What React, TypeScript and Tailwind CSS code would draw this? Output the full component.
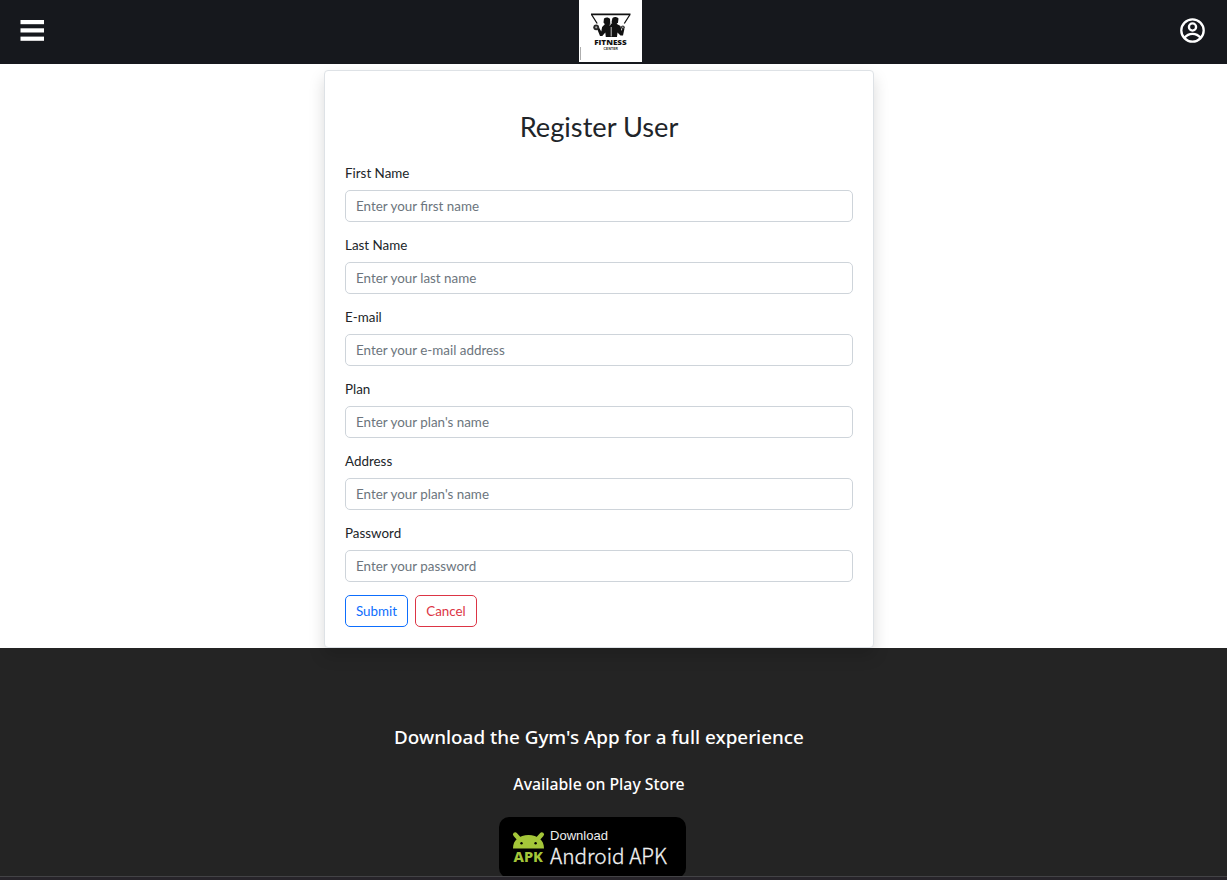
const fields = [
  { label: "First Name", hint: "Enter your first name", type: "text" },
  { label: "Last Name", hint: "Enter your last name", type: "text" },
  { label: "E-mail", hint: "Enter your e-mail address", type: "email" },
  { label: "Plan", hint: "Enter your plan's name", type: "text" },
  { label: "Address", hint: "Enter your plan's name", type: "text" },
  { label: "Password", hint: "Enter your password", type: "password" },
];

function Logo() {
  return (
    <svg className="block h-[62px] w-[63px]" viewBox="0 0 63 62">
      <rect width="63" height="62" fill="#fff" />
      <path d="M12.8 15l5.4 8.5M50.7 15l-5.4 8.5" fill="none" stroke="#111" strokeWidth="1.3" />
      <path d="M12 13.5H51.5V15.3H12Z" fill="#111" />
      <path d="M25 18.500c2-1.500 4.500-1.500 6 .5l.5 4-2 2h-3l-2-2.500Z" fill="#111" />
      <path d="M33.500 18c2-1.500 4.500-1 6 .5l-.5 4-2.500 2.500h-3l-1-3Z" fill="#111" />
      <path d="M26.500 23.500h10.500l4.500 2.500 1 5 1.200-3 1.800.5-1.500 7h-2.500l-3-3-.5 4.500H26.800l-.5-4.500-3 3.500H21l-3-7.500 2-1 2.300 4 .8-4.500Z" fill="#111" />
      <path d="M31.800 19v4.500l-1 2M32.200 27v9.500" fill="none" stroke="#eee" strokeWidth=".8" />
      <circle cx="17.2" cy="27.3" r="2.9" fill="#2a2a2a" />
      <circle cx="17.2" cy="27.3" r="1.1" fill="#aaa" />
      <circle cx="43.8" cy="27.3" r="1.9" fill="#333" />
      <circle cx="43.8" cy="27.3" r=".7" fill="#bbb" />
      <text x="15.2" y="45.3" textLength="32.5" lengthAdjust="spacingAndGlyphs" fontFamily="Open Sans, sans-serif" fontWeight="800" fontSize="7.5" fill="#111">FITNESS</text>
      <text x="24.5" y="50.2" textLength="14.5" fontFamily="Liberation Sans, sans-serif" fontWeight="700" fontSize="3.3" fill="#222">CENTER</text>
      <path d="M1.5 47v13" stroke="#999" strokeWidth=".8" />
    </svg>
  );
}

function Header() {
  return (
    <header className="flex h-16 shrink-0 items-start bg-[#16181d] pl-5 pr-[22px]">
      <button aria-label="Menu" className="mt-[19px]">
        <svg className="block h-[23px] w-6" viewBox="0 0 24 23" fill="#fff">
          <rect x=".5" y="1" width="23.5" height="4.2" />
          <rect x=".5" y="9.3" width="23.5" height="4.2" />
          <rect x=".5" y="17.6" width="23.5" height="4.2" />
        </svg>
      </button>
      <div className="ml-[535px]"><Logo /></div>
      <button aria-label="Account" className="ml-auto mt-[18px]">
        <svg className="block size-[25px]" viewBox="0 0 25 25" fill="none" stroke="#fff" strokeWidth="2.3">
          <circle cx="12.5" cy="12.5" r="11.2" />
          <circle cx="12.5" cy="9" r="3.6" />
          <path d="M4.5 19.8c2-2.6 4.9-4 8-4s6 1.4 8 4" />
        </svg>
      </button>
    </header>
  );
}

export default function App() {
  return (
    <div className="flex h-[880px] flex-col overflow-hidden bg-white font-['Lato',sans-serif] text-[#212529]">
      <Header />
      <main className="relative ml-[324px] mt-[6px] h-[578px] w-[550px] shrink-0 rounded border border-[#dee2e6] bg-white px-5 pt-[36px] shadow-[0_8px_16px_rgba(0,0,0,0.15)]">
        <h1 className="mb-[15px] h-10 text-center text-[27.2px] leading-10">Register User</h1>
        <form>
          {fields.map((f) => (
            <div key={f.label} className="mb-3 h-[60px]">
              <label className="block h-7 pt-px text-[13.4px] leading-[21px]">{f.label}</label>
              <input
                type={f.type}
                placeholder={f.hint}
                className="block h-8 w-full rounded-[5px] border border-[#ced4da] px-[10px] pb-px text-[13.4px] placeholder:text-[#6c757d]"
              />
            </div>
          ))}
          <div className="flex gap-[7px] pt-px">
            <button type="button" className="h-8 w-[63px] rounded-[5px] border border-[#0d6efd] pt-px text-[13.4px] text-[#0d6efd]">Submit</button>
            <button type="button" className="h-8 w-[62px] rounded-[5px] border border-[#dc3545] pt-px text-[13.4px] text-[#dc3545]">Cancel</button>
          </div>
        </form>
      </main>
      <footer className="flex h-[228px] shrink-0 flex-col items-start bg-[#242424] pt-[74px] text-white">
        <h2 className="ml-[324px] h-[30px] w-[550px] whitespace-nowrap text-center font-['Noto_Sans',sans-serif] text-[18.85px] font-medium leading-[30px]">Download the Gym's App for a full experience</h2>
        <p className="ml-[324px] mt-[20px] h-6 w-[550px] whitespace-nowrap text-center font-['Noto_Sans',sans-serif] text-[15.8px] font-medium leading-6">Available on Play Store</p>
        <a className="ml-[499px] mt-[21px] block h-[59px] w-[187px] overflow-hidden">
          <svg className="block" width="187" height="62" viewBox="0 0 187 62">
            <rect width="187" height="61" rx="10" fill="#000" />
            <path d="M14 31.5c0-4.500 1.500-7.500 4-9.500 3-2.800 7-4 11.500-4s8.500 1.200 11.500 4c2.500 2 4 5 4 9.500Z" fill="#a4c639" />
            <path d="M16.200 17.500l4.500 5M42.800 17.500l-4.500 5" stroke="#a4c639" strokeWidth="4.4" strokeLinecap="round" />
            <circle cx="22.5" cy="26.3" r="1.2" fill="#000" />
            <circle cx="36.6" cy="26.3" r="1.2" fill="#000" />
            <text x="14.5" y="45.3" textLength="29.500" lengthAdjust="spacingAndGlyphs" fontFamily="Noto Sans, sans-serif" fontWeight="800" fontSize="13.5" fill="#a4c639">APK</text>
            <text x="51" y="23" textLength="58" lengthAdjust="spacingAndGlyphs" fontFamily="Liberation Sans, sans-serif" fontSize="13" fill="#eee">Download</text>
            <text x="51" y="46.5" textLength="117" lengthAdjust="spacingAndGlyphs" fontFamily="Noto Sans CJK SC, sans-serif" fontWeight="300" fontSize="21" fill="#f2f2f2" stroke="#f2f2f2" strokeWidth=".3">Android APK</text>
          </svg>
        </a>
      </footer>
      <div className="h-1 shrink-0 border-t border-[#434346] bg-[#27242a]" />
    </div>
  );
}
